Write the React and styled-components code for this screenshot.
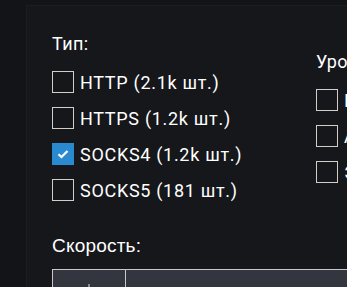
import React from "react";
import styled, { createGlobalStyle } from "styled-components";

const Global = createGlobalStyle`
  html, body { margin: 0; padding: 0; background: #131418; overflow: hidden; }
  body { font-family: Roboto, "Noto Sans", sans-serif; color: #ffffff; }
`;

const Panel = styled.div`
  margin: 5px 0 0 26px;
  border-top: 1px solid #1c1d22;
  border-left: 1px solid #1c1d22;
  background: #16171b;
  padding: 26px 0 0 25px;
  height: 400px;
  box-sizing: border-box;
`;

const FilterRow = styled.div`
  display: flex;
  align-items: center;
`;

const Group = styled.div`
  width: ${(p) => p.$width || "auto"};
  flex-shrink: 0;
  display: flex;
  flex-direction: column;
`;

const GroupTitle = styled.div`
  font-family: Roboto, sans-serif;
  font-size: 18px;
  line-height: 24px;
  letter-spacing: 0.4px;
  margin-bottom: 8px;
  white-space: nowrap;
`;

const Option = styled.label`
  display: flex;
  align-items: center;
  gap: 6px;
  height: 36px;
  font-size: 18px;
  letter-spacing: 0.7px;
  white-space: nowrap;
`;

const Box = styled.span`
  width: 22px;
  height: 22px;
  box-sizing: border-box;
  flex-shrink: 0;
  display: flex;
  align-items: center;
  justify-content: center;
  border: ${(p) => (p.$checked ? "none" : "1.5px solid #d2cdc7")};
  background: ${(p) => (p.$checked ? "#2a8ad0" : "transparent")};
`;

const SpeedTitle = styled.div`
  margin-top: 26px;
  font-family: "Liberation Sans", Arial, sans-serif;
  font-size: 19px;
  letter-spacing: 0.2px;
  line-height: 24px;
`;

const SpeedTable = styled.div`
  margin-top: 11px;
  display: flex;
  height: 60px;
  border-top: 1.5px solid #c8c8cc;
  border-left: 1.5px solid #c8c8cc;
  background: #33363f;
`;

const Cell = styled.div`
  width: ${(p) => p.$width || "auto"};
  flex: ${(p) => (p.$width ? "0 0 auto" : "1")};
  border-right: ${(p) => (p.$divider ? "1.5px solid #c8c8cc" : "none")};
  display: flex;
  justify-content: center;
  padding-top: 14px;
  box-sizing: border-box;
`;

const Tick = styled.span`
  width: 2px;
  height: 6px;
  background: #8b8d94;
`;

const Check = () => (
  <svg width="12" height="10" viewBox="0 0 12 10">
    <path d="M1.5 5.2 L4.5 8 L10.5 2" fill="none" stroke="#ffffff" strokeWidth="2.2" />
  </svg>
);

const types = [
  { label: "HTTP (2.1k шт.)", checked: false },
  { label: "HTTPS (1.2k шт.)", checked: false },
  { label: "SOCKS4 (1.2k шт.)", checked: true },
  { label: "SOCKS5 (181 шт.)", checked: false },
];

const levels = ["Прозрачные", "Анонимные", "Элитные"];

export default function App() {
  return (
    <>
      <Global />
      <Panel>
        <FilterRow>
          <Group $width="264px">
            <GroupTitle>Тип:</GroupTitle>
            {types.map((t) => (
              <Option key={t.label}>
                <Box $checked={t.checked}>{t.checked && <Check />}</Box>
                {t.label}
              </Option>
            ))}
          </Group>
          <Group>
            <GroupTitle>Уровень анонимности:</GroupTitle>
            {levels.map((l) => (
              <Option key={l}>
                <Box />
                {l}
              </Option>
            ))}
          </Group>
        </FilterRow>
        <SpeedTitle>Скорость:</SpeedTitle>
        <SpeedTable>
          <Cell $width="73px" $divider>
            <Tick />
          </Cell>
          <Cell />
        </SpeedTable>
      </Panel>
    </>
  );
}
